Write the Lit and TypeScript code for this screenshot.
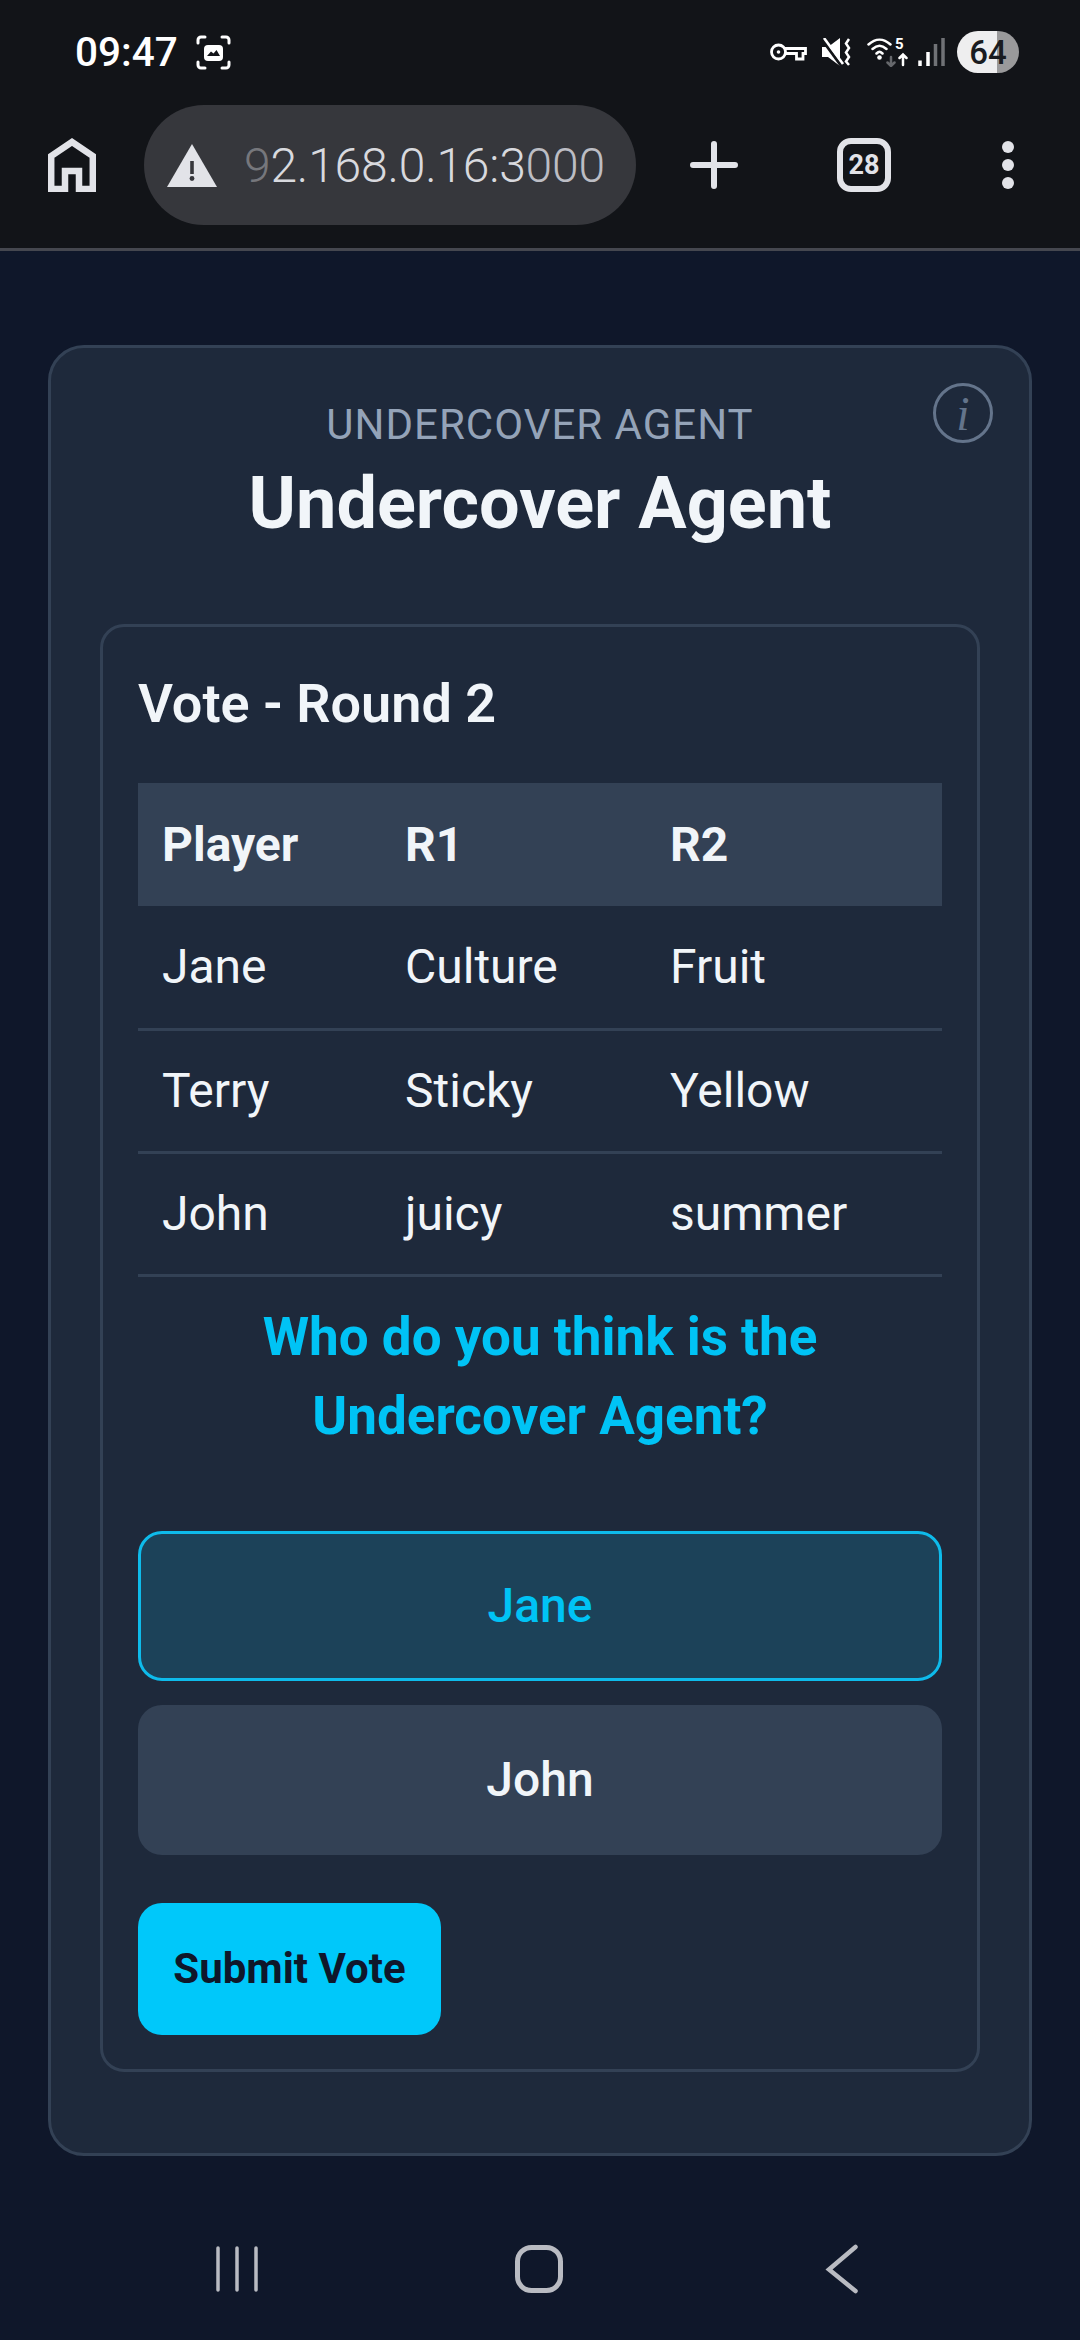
import { LitElement, html, css } from "lit";
import { customElement } from "lit/decorators.js";

@customElement("app-root")
export class AppRoot extends LitElement {
  static styles = css`
    :host { display: block; width: 1080px; height: 2340px; background: #0f172a; font-family: Roboto, sans-serif; color: #f1f5f9; position: relative; overflow: hidden; }
    .chrome { height: 248px; background: #121418; border-bottom: 3px solid #45474f; box-sizing: content-box; display: flex; flex-direction: column; }
    .status { height: 104px; display: flex; align-items: center; justify-content: space-between; padding: 0 61px 0 75px; color: #fff; }
    .left, .right { display: flex; align-items: center; }
    .time { font-size: 40.5px; font-weight: 500; margin-right: 18px; }
    .battery { width: 62px; height: 42px; border-radius: 21px; background: linear-gradient(90deg, #eeeeef 0 40px, #9a9a9b 40px); color: #1a1c20; font-size: 33px; font-weight: 500; display: flex; align-items: center; justify-content: center; margin-left: 12px; }
    .toolbar { height: 120px; display: flex; align-items: center; margin-top: 1px; position: relative; }
    .home { margin-left: 48px; width: 48px; height: 54px; }
    .url { margin-left: 48px; width: 492px; height: 120px; border-radius: 60px; background: #36373c; display: flex; align-items: center; overflow: hidden; box-sizing: border-box; padding-left: 23px; }
    .urltext { font-size: 48px; color: #d8d9de; margin-left: 27px; white-space: nowrap; letter-spacing: -0.2px; font-weight: 300; }
    .nine { color: #76777c; }
    .tail { color: #bcbdc4; }
    .plus { margin-left: 54px; width: 48px; height: 48px; }
    .tabs { margin-left: 99px; width: 54px; height: 54px; border: 6px solid #e2e3e8; border-radius: 14px; box-sizing: border-box; color: #e2e3e8; font-size: 27px; font-weight: 700; display: flex; align-items: center; justify-content: center; }
    .dots { margin-left: 111px; width: 12px; display: flex; flex-direction: column; gap: 6px; }
    .dots i { display: block; width: 12px; height: 12px; border-radius: 50%; background: #e2e3e8; }
    main { padding: 94px 48px 0; }
    .card { position: relative; height: 1811px; box-sizing: border-box; background: #1e293b; border: 3px solid #334155; border-radius: 36px; padding: 52px 49px 0; }
    .info { position: absolute; top: 35px; right: 36px; width: 60px; height: 60px; box-sizing: border-box; border: 3px solid #64748b; border-radius: 50%; color: #64748b; font-family: "Liberation Serif", serif; font-style: italic; font-size: 48px; display: flex; align-items: center; justify-content: center; }
    .eyebrow { text-align: center; font-size: 42px; line-height: 50px; color: #94a3b8; letter-spacing: 1px; }
    h1 { margin: 9px 0 0; text-align: center; font-size: 72px; line-height: 90px; font-weight: 700; }
    .panel { margin-top: 75px; height: 1448px; box-sizing: border-box; border: 3px solid #334155; border-radius: 24px; padding: 44px 35px 0; }
    h2 { margin: 0; font-size: 54px; line-height: 66px; font-weight: 600; }
    table { margin-top: 46px; width: 100%; border-collapse: collapse; table-layout: fixed; font-size: 48px; }
    th, td { height: 123px; box-sizing: border-box; padding: 0 24px; text-align: left; }
    th { background: #334155; font-weight: 700; }
    td { border-bottom: 3px solid #334155; }
    .c1 { width: 243px; } .c2 { width: 265px; }
    .question { margin: 21px 0 0; text-align: center; color: #00c3f5; font-size: 53px; line-height: 79px; font-weight: 700; }
    .opts { margin-top: 75px; display: flex; flex-direction: column; gap: 24px; }
    .opt { height: 150px; border-radius: 24px; background: #334155; display: flex; align-items: center; justify-content: center; font-size: 48px; font-weight: 500; box-sizing: border-box; }
    .opt.sel { background: #1c4259; border: 3px solid #0ebbeb; color: #00c3f5; }
    .submit { margin-top: 48px; width: 303px; height: 132px; border-radius: 24px; background: #00c8fa; color: #0f172a; font-size: 42px; font-weight: 700; display: flex; align-items: center; justify-content: center; }
    .nav { position: absolute; left: 0; right: 0; bottom: 0; height: 140px; }
    .nav svg { position: absolute; left: 0; top: 0; }
  `;

  render() {
    const rows = [["Jane", "Culture", "Fruit"], ["Terry", "Sticky", "Yellow"], ["John", "juicy", "summer"]];
    return html`
      <div class="chrome">
        <div class="status">
          <div class="left">
            <span class="time">09:47</span>
            <svg width="35" height="35" viewBox="0 0 35 35" fill="none" stroke="#fff" stroke-width="3" stroke-linecap="round">
              <path d="M2 8V5a3 3 0 0 1 3-3h4M26 2h4a3 3 0 0 1 3 3v3M33 27v3a3 3 0 0 1-3 3h-4M9 33H5a3 3 0 0 1-3-3v-3"/>
              <rect x="8" y="10" width="19" height="16" rx="4" fill="#fff" stroke="none"/>
              <path d="M11 21l4-4.500 2.500 2 3-3.500 3.500 6z" fill="#121418" stroke="none"/>
            </svg>
          </div>
          <div class="right">
            <svg width="37" height="18" viewBox="0 0 37 18" fill="none" stroke="#fff" stroke-width="2.800">
              <circle cx="8.500" cy="9" r="7"/><circle cx="8.500" cy="9" r="1.800" fill="#fff" stroke="none"/>
              <path d="M15 5.500h20.500v5H33v5.500h-6.500v-5.500H15"/>
            </svg>
            <svg style="margin-left:15px" width="29" height="28" viewBox="0 0 29 28">
              <path d="M0 9h6L18 0v28L6 19H0z" fill="#fff"/>
              <path d="M0 1.500l19 26" stroke="#121418" stroke-width="3"/>
              <path d="M2 0l19 26" stroke="#fff" stroke-width="2.600"/>
              <path d="M27 1l-3 4.500 3 4.500-3 4.500 3 4.500-3 4.500 3 3.500" fill="none" stroke="#fff" stroke-width="2.500"/>
            </svg>
            <svg style="margin-left:16px" width="41" height="30" viewBox="0 0 41 30" fill="none" stroke="#fff" stroke-width="2.500" stroke-linecap="round">
              <path d="M1.500 7.500c7-6.500 15-6.500 22 0M5.500 12c5-4.500 9-4.500 14 0M9.500 16.500c2.500-2.500 3.500-2.500 6 0"/>
              <circle cx="17" cy="19" r="0" />
              <circle cx="12.500" cy="20.500" r="2.300" fill="#fff" stroke="none"/>
              <path d="M26 20v8.500M22.500 25.500l3.500 3.500 3.500-3.500" transform="translate(-2 0)" stroke="#66686c"/>
              <path d="M36 28V17.500M32.500 21l3.500-3.500 3.500 3.500"/>
              <text x="28" y="12" font-size="15" font-weight="700" fill="#fff" stroke="none" font-family="Roboto, sans-serif">5</text>
            </svg>
            <svg style="margin-left:10px" width="27" height="28" viewBox="0 0 27 28" fill="none" stroke-width="3.500">
              <path d="M2 22.500V28M10 14v14" stroke="#fff"/>
              <path d="M17.500 6v22M25 0v28" stroke="#707276"/>
            </svg>
            <div class="battery">64</div>
          </div>
        </div>
        <div class="toolbar">
          <svg class="home" viewBox="0 0 48 54" fill="none" stroke="#e2e3e8" stroke-width="6.500">
            <path d="M3.200 51V18L24 4l20.800 14v33H31V33H17v18z"/>
          </svg>
          <div class="url">
            <svg width="50" height="43" viewBox="0 0 50 43"><path d="M25 0l25 43H0z" fill="#e2e3e8"/><rect x="23.200" y="17" width="3.600" height="13" fill="#36373c"/><circle cx="25" cy="34.500" r="2.400" fill="#36373c"/></svg>
            <div class="urltext"><span class="nine">9</span>2.168.0.16:3<span class="tail">000</span></div>
          </div>
          <svg class="plus" viewBox="0 0 48 48" stroke="#e2e3e8" stroke-width="6" stroke-linecap="round"><path d="M24 3v42M3 24h42"/></svg>
          <div class="tabs">28</div>
          <div class="dots"><i></i><i></i><i></i></div>
        </div>
      </div>
      <main>
        <section class="card">
          <div class="info">i</div>
          <div class="eyebrow">UNDERCOVER AGENT</div>
          <h1>Undercover Agent</h1>
          <div class="panel">
            <h2>Vote - Round 2</h2>
            <table>
              <colgroup><col class="c1" /><col class="c2" /><col /></colgroup>
              <thead><tr><th>Player</th><th>R1</th><th>R2</th></tr></thead>
              <tbody>${rows.map((r) => html`<tr>${r.map((c) => html`<td>${c}</td>`)}</tr>`)}</tbody>
            </table>
            <p class="question">Who do you think is the<br />Undercover Agent?</p>
            <div class="opts">
              <div class="opt sel">Jane</div>
              <div class="opt">John</div>
            </div>
            <div class="submit">Submit Vote</div>
          </div>
        </section>
      </main>
      <div class="nav">
        <svg width="1080" height="140" viewBox="0 0 1080 140" fill="none" stroke="#b9bbc2" stroke-linecap="round">
          <path d="M218 48v42M237 48v42M256 48v42" stroke-width="3.500"/>
          <rect x="517.500" y="47.500" width="43" height="43" rx="14" stroke-width="5"/>
          <path d="M855 47l-26 22 26 22" stroke-width="4.500" style="display:none"/>
          <path d="M856 47l-27 22 27 22" stroke-width="0"/>
          <path d="M855.500 47l-18.500 22 18.500 22" stroke-width="4.500" transform="translate(-8 0)" style="display:none"/>
          <path d="M855 47l-26.500 22.500L855 91" stroke-width="0"/>
          <path d="M855 47L829 69l26 22" stroke-width="0"/>
          <path d="M855.500 47 828.500 69l27 22" stroke-width="0"/>
          <path d="M855.500 47 829 69.500 855.500 91" stroke-width="4.500"/>
        </svg>
      </div>
    `;
  }
}
